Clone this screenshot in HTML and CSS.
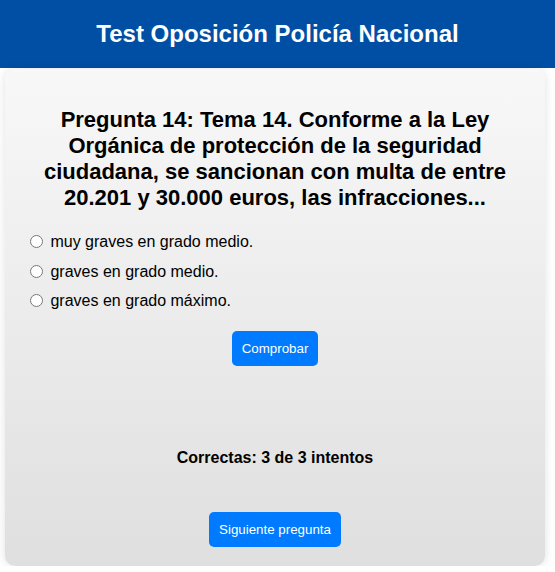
FILE: index.html
```html
<!DOCTYPE html>
<html lang="es">
<head>
<meta charset="utf-8">
<title>Test Oposición Policía Nacional</title>
<link rel="stylesheet" href="styles.css">
</head>
<body>
<header class="site-header">
  <h1 class="site-title">Test Oposición Policía Nacional</h1>
</header>
<main class="card">
  <h2 class="question">Pregunta 14: Tema 14. Conforme a la Ley Orgánica de protección de la seguridad ciudadana, se sancionan con multa de entre 20.201 y 30.000 euros, las infracciones...</h2>
  <div class="options">
    <label class="option"><input type="radio" name="r"> muy graves en grado medio.</label>
    <label class="option"><input type="radio" name="r"> graves en grado medio.</label>
    <label class="option"><input type="radio" name="r"> graves en grado máximo.</label>
  </div>
  <div class="actions">
    <button class="btn">Comprobar</button>
  </div>
  <p class="score">Correctas: 3 de 3 intentos</p>
  <div class="actions">
    <button class="btn">Siguiente pregunta</button>
  </div>
</main>
</body>
</html>
```
FILE: styles.css
```css
html, body {
  margin: 0;
  padding: 0;
  background: #ffffff;
  font-family: "Liberation Sans", Arial, sans-serif;
  color: #000;
}
.site-header {
  background: #004fa4;
  padding: 20px 0;
  text-align: center;
}
.site-title {
  margin: 0;
  color: #fff;
  font-size: 24px;
  font-weight: bold;
  line-height: 28px;
}
.card {
  display: block;
  margin: 1px 10px 0 5px;
  padding: 20px 20px 19px 20px;
  border-radius: 10px;
  background: linear-gradient(to bottom, #f8f8f8, #dfdfdf);
  box-shadow: 0 0 10px rgba(0, 0, 0, 0.12);
}
.question {
  margin: 18px 0 21px;
  font-size: 22px;
  line-height: 26px;
  font-weight: bold;
  text-align: center;
}
.options {
  display: flex;
  flex-direction: column;
  gap: 10.5px;
}
.option {
  display: block;
  font-size: 16px;
  line-height: 19px;
}
.option input {
  margin: 3px 3px 0 5px;
  vertical-align: top;
}
.actions {
  display: flex;
  justify-content: center;
  margin-top: 21px;
}
.btn {
  font-family: "Liberation Sans", Arial, sans-serif;
  font-size: 13.33px;
  line-height: 15px;
  padding: 10px;
  border: none;
  border-radius: 5px;
  background: #007bff;
  color: #fff;
  cursor: pointer;
}
.score {
  margin: 83px 0 45px;
  font-size: 16px;
  line-height: 18px;
  font-weight: bold;
  text-align: center;
}
.score + .actions {
  margin-top: 0;
}
```
